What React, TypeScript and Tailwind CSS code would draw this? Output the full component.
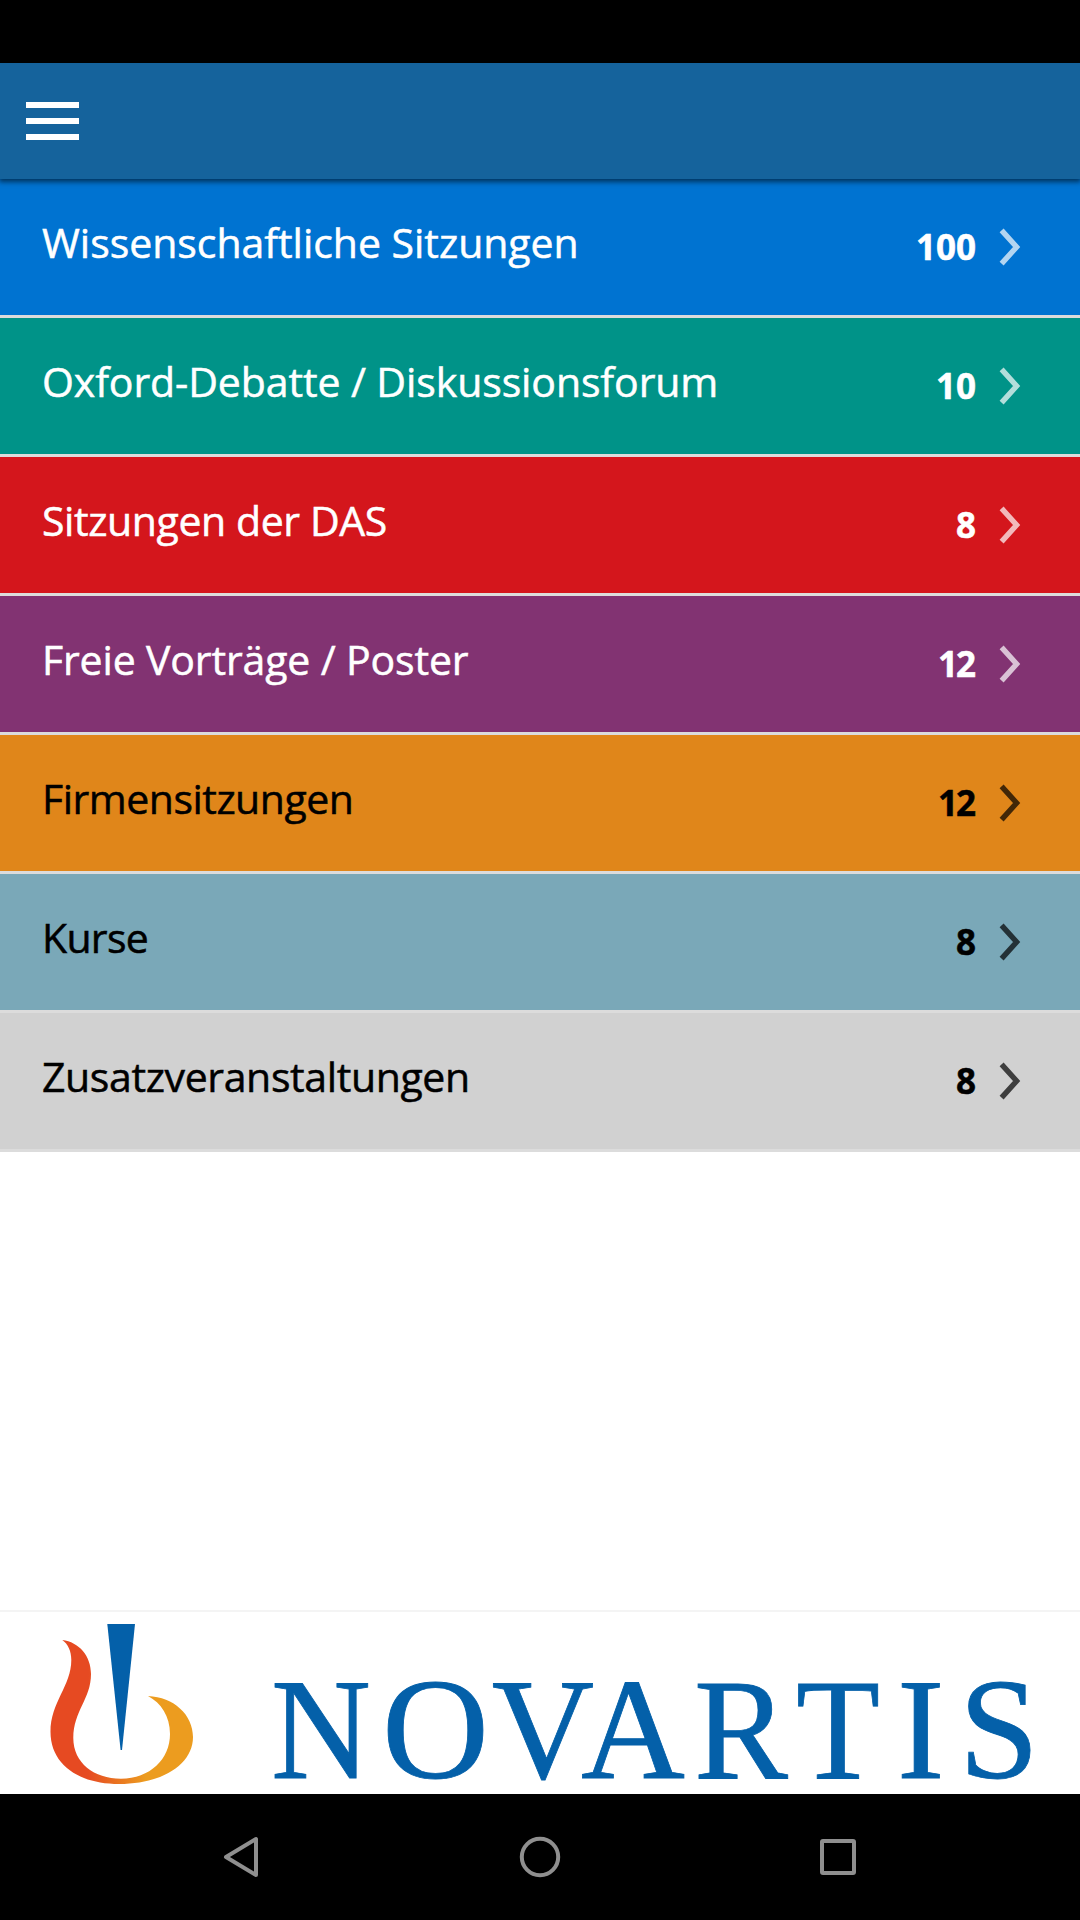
type Row = {
  label: string;
  count: number;
  row: string;
  tone: string;
  text: string;
  digits: string;
};

const rows: Row[] = [
  { label: "Wissenschaftliche Sitzungen", count: 100, row: "bg-[#0073d1]", tone: "text-white", text: "pl-[42px] tracking-[-0.03px]", digits: "pr-[23px]" },
  { label: "Oxford-Debatte / Diskussionsforum", count: 10, row: "bg-[#009388]", tone: "text-white", text: "pl-[42px] tracking-[-0.1px]", digits: "pr-[23px]" },
  { label: "Sitzungen der DAS", count: 8, row: "bg-[#d4161c]", tone: "text-white", text: "pl-[42px] tracking-[-0.4px]", digits: "pr-[23px]" },
  { label: "Freie Vorträge / Poster", count: 12, row: "bg-[#823372]", tone: "text-white", text: "pl-[42px] tracking-[-0.15px]", digits: "pr-[25px] tracking-[-2px]" },
  { label: "Firmensitzungen", count: 12, row: "bg-[#e0861a]", tone: "text-black", text: "pl-[42px] tracking-[-0.5px]", digits: "pr-[25px] tracking-[-2px]" },
  { label: "Kurse", count: 8, row: "bg-[#7aa8b8]", tone: "text-black", text: "pl-[42px] tracking-[-0.7px]", digits: "pr-[23px]" },
  { label: "Zusatzveranstaltungen", count: 8, row: "bg-[#d1d1d1]", tone: "text-black", text: "pl-[42px] tracking-[-0.37px]", digits: "pr-[23px]" },
];

function Chevron() {
  return (
    <svg width="24" height="40" viewBox="0 0 24 40" fill="none" className="opacity-70">
      <path d="M2.6 3.4 L17.6 20 L2.6 36.6" stroke="currentColor" strokeWidth="5.4" />
    </svg>
  );
}

const letters = [
  { ch: "N", x: 271, w: 100 },
  { ch: "O", x: 382, w: 107 },
  { ch: "V", x: 491.8, w: 102.5 },
  { ch: "A", x: 581, w: 104 },
  { ch: "R", x: 694, w: 94 },
  { ch: "T", x: 796, w: 84 },
  { ch: "I", x: 897, w: 47.5 },
  { ch: "S", x: 959, w: 80 },
];

function Logo() {
  return (
    <svg width="1080" height="182" viewBox="0 1612 1080 182" className="block overflow-visible">
      <defs>
        <linearGradient id="flame" gradientUnits="userSpaceOnUse" x1="88" y1="0" x2="146" y2="0">
          <stop offset="0" stopColor="#e64a22" />
          <stop offset="1" stopColor="#ec9c1f" />
        </linearGradient>
      </defs>
      <path
        fill="url(#flame)"
        d="M62.3 1640 C79 1642 91 1656 91 1674 C91 1699 73.3 1711 73.3 1738 C73.3 1763 94 1778.7 121 1778.7 C150 1778.7 170 1759 170 1734 C170 1716 161 1703 148 1696 C174 1697 193 1715 193 1737 C193 1764 163 1784 119 1784 C78 1784 50.5 1764 50.5 1732 C50.5 1702 71.3 1686 71.3 1660 C71.3 1651 68 1644 62.3 1640 Z"
      />
      <path fill="#0460a9" d="M107.3 1624 H135 L122 1750 H120.6 Z" />
      <g fill="#0460a9" stroke="#0460a9" strokeWidth="0.8" fontFamily="'Liberation Serif', serif" fontSize="143">
        {letters.map((l) => (
          <text key={l.ch} x={l.x} y="1778.3" textLength={l.w} lengthAdjust="spacingAndGlyphs">
            {l.ch}
          </text>
        ))}
      </g>
    </svg>
  );
}

export default function App() {
  return (
    <div className="flex h-[1920px] w-[1080px] flex-col overflow-hidden bg-white font-['Open_Sans',sans-serif]">
      <div className="h-[63px] shrink-0 bg-black" />
      <header className="z-10 flex h-[116px] shrink-0 items-center bg-[#15639c] pl-[26px] shadow-[0_2px_5px_1px_rgba(0,0,0,0.55)]">
        <button aria-label="Menü" className="flex flex-col gap-[10px]">
          <span className="block h-[6px] w-[53px] bg-white" />
          <span className="block h-[6px] w-[53px] bg-white" />
          <span className="block h-[6px] w-[53px] bg-white" />
        </button>
      </header>
      <main className="flex grow flex-col">
        {rows.map((r) => (
          <div
            key={r.label}
            className={`flex h-[139px] items-center border-b-3 border-[#dcdcdc] pr-[57px] ${r.row} ${r.tone}`}
          >
            <span
              className={`grow whitespace-nowrap pb-[11px] text-[41px] leading-[56px] [-webkit-text-stroke:0.5px_currentColor] ${r.text}`}
            >
              {r.label}
            </span>
            <span className={`text-[35px] font-bold leading-[48px] [-webkit-text-stroke:0.5px_currentColor] ${r.digits}`}>
              {r.count}
            </span>
            <Chevron />
          </div>
        ))}
      </main>
      <footer className="shrink-0 border-t-2 border-[#f4f4f4] bg-white">
        <Logo />
      </footer>
      <nav className="h-[126px] shrink-0 bg-black">
        <svg width="1080" height="126" viewBox="0 1794 1080 126" fill="none" stroke="#8f8f8f" strokeWidth="4">
          <path d="M256 1839 V1875 L226 1857 Z" strokeLinejoin="round" />
          <circle cx="540" cy="1857" r="18.2" />
          <rect x="822" y="1841" width="32" height="32" rx="1" />
        </svg>
      </nav>
    </div>
  );
}
